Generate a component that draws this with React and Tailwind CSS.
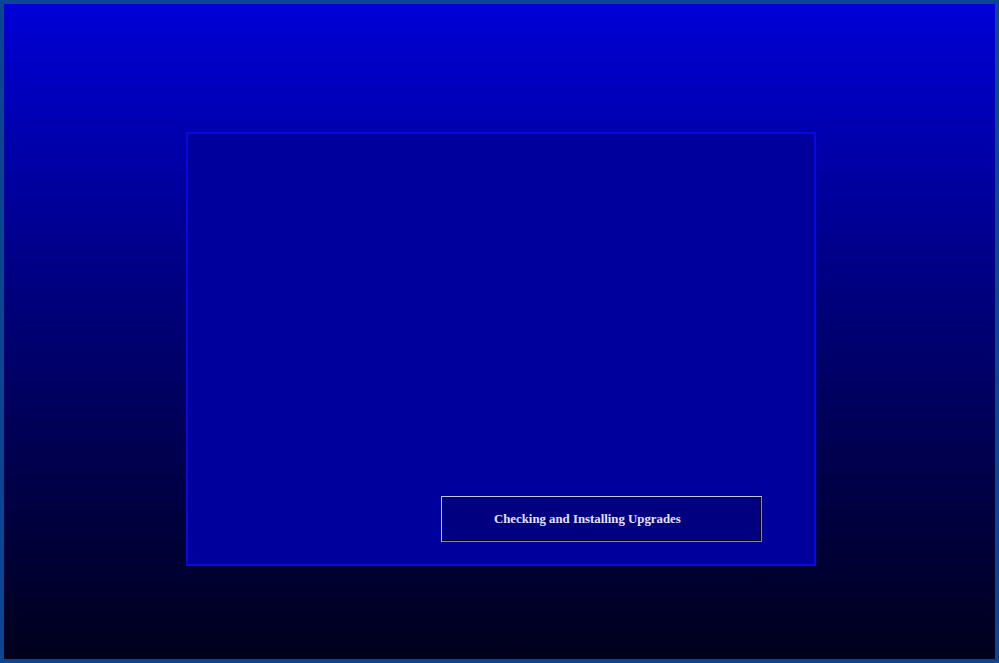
import React from "react";

function UpgradeButton() {
  return (
    <div
      className="flex items-center h-[46px] w-[321px] bg-[#000080] border border-t-[#c4c4f0] border-l-[#c4c4f0] border-b-[#8a8a9a] border-r-[#8a8a9a] shadow-[inset_-1px_-1px_0_#000010]"
      style={{ fontFamily: '"Liberation Serif", "Times New Roman", serif' }}
    >
      <span className="pl-[52px] text-[12.8px] font-bold text-[#e4e4ff] leading-none">
        Checking and Installing Upgrades
      </span>
    </div>
  );
}

export default function App() {
  return (
    <div className="h-[663px] w-full border-4 border-[#0c4592] bg-gradient-to-b from-[#0000d8] to-[#00001c]">
      <div className="pt-[128px] pl-[182px]">
        <div className="w-[630px] h-[434px] border-2 border-[#0808e0] bg-[#00009c] flex flex-col">
          <div className="flex-1" />
          <div className="pl-[253px] pb-[22px]">
            <UpgradeButton />
          </div>
        </div>
      </div>
    </div>
  );
}
